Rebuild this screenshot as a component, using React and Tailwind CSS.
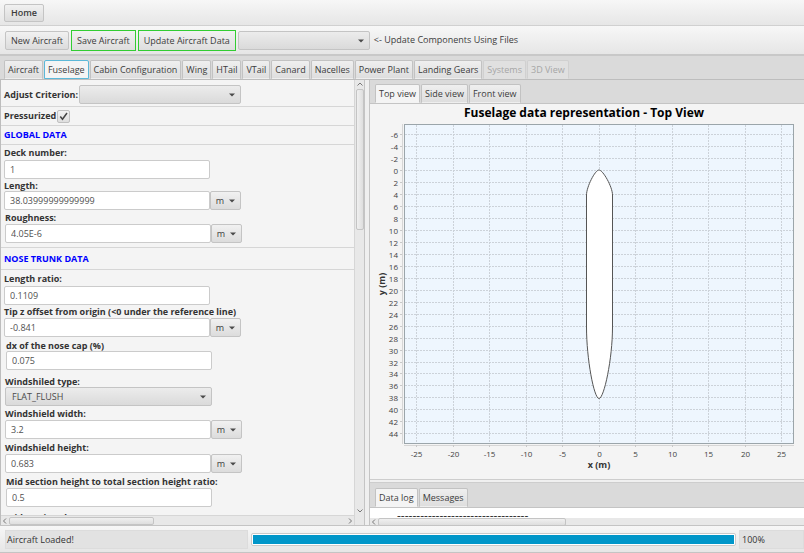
import React from "react";

const btn =
  "rounded-[2px] border border-[#c4c4c4] bg-gradient-to-b from-[#f1f1f1] to-[#dcdcdc] text-[#3c3c3c]";
const greenBtn =
  "h-[21px] border border-[#32cd32] bg-gradient-to-b from-[#f1f1f1] to-[#dedede] px-[5px] leading-[19px] text-[#3c3c3c] whitespace-nowrap";
const selectBox =
  "block h-[19px] w-full appearance-none rounded-[2px] border border-[#c4c4c4] bg-gradient-to-b from-[#ececec] to-[#dadada] pl-[6px] text-[9px] leading-[17px] text-[#4a4a4a]";
const inputBox =
  "block h-[19px] w-[206px] rounded-[2px] border border-[#cbcbcb] bg-white px-[5px] text-[9px] leading-[17px] text-[#505050]";
const labelText = "block h-3 text-[9px] font-bold leading-[13px] whitespace-nowrap";

function Caret({ className }) {
  return (
    <svg viewBox="0 0 6 4" className={`pointer-events-none h-[4px] w-[6px] ${className}`}>
      <path d="M0 0.4h6L3 3.6z" fill="#4a4a4a" />
    </svg>
  );
}

function Select({ id, label, value, className }) {
  return (
    <div className={`relative ${className}`}>
      <select id={id} aria-label={label} className={selectBox} defaultValue={value}>
        <option value={value}>{value}</option>
      </select>
      <Caret className="absolute right-[6px] top-[8px]" />
    </div>
  );
}

function Unit() {
  return (
    <button className={`${btn} flex h-[19px] w-[31px] items-center justify-center gap-[5px] text-[9px]`}>
      m
      <Caret className="" />
    </button>
  );
}

function Field({ id, label, value, unit, className, gap }) {
  return (
    <div className={`flex flex-col ${gap} ${className}`}>
      <label htmlFor={id} className={labelText}>{label}</label>
      <div className="flex">
        <input id={id} type="text" defaultValue={value} className={inputBox} />
        {unit && <Unit />}
      </div>
    </div>
  );
}

function Tabs({ items, selected, focus, disabled = [] }) {
  return (
    <div role="tablist" className="flex h-[19px] items-stretch gap-px">
      {items.map((t) => {
        let look = "border-[#c2c2c2] border-b-transparent bg-gradient-to-b from-[#efefef] to-[#dedede] text-[#3c3c3c]";
        if (t === selected)
          look = focus
            ? "border-[#5cb8d8] bg-[#f4f4f4] text-[#3c3c3c]"
            : "border-[#c2c2c2] border-b-transparent bg-[#f4f4f4] text-[#3c3c3c]";
        if (disabled.includes(t)) look = "border-[#d0d0d0] border-b-transparent bg-[#e0e0e0] text-[#a6a6a6]";
        return (
          <button
            key={t}
            role="tab"
            aria-selected={t === selected}
            disabled={disabled.includes(t)}
            className={`rounded-t-[2px] border px-[3px] text-[9px] leading-[17px] whitespace-nowrap ${look}`}
          >
            {t}
          </button>
        );
      })}
    </div>
  );
}

function Chevron({ d }) {
  return (
    <svg viewBox="0 0 8 8" className="size-2 shrink-0">
      <path d={d} fill="none" stroke="#777" strokeWidth="1" />
    </svg>
  );
}

const xTicks = [-25, -20, -15, -10, -5, 0, 5, 10, 15, 20, 25];
const yTicks = Array.from({ length: 26 }, (_, i) => -6 + i * 2);
const px = (v) => Math.round(228.5 + v * 7.3) + 0.5;
const py = (v) => Math.round(66 + v * 5.985) + 0.5;

function Chart() {
  return (
    <svg viewBox="0 0 434 375" role="img" aria-label="Fuselage top view" className="block h-full w-full">
      <text x="214" y="13" textAnchor="middle" fontSize="12" fontWeight="700" fill="#000">
        Fuselage data representation - Top View
      </text>
      <rect x="34.5" y="20.5" width="389" height="319" fill="#eef6fe" />
      <g stroke="#ccd2d9" strokeDasharray="2 1">
        {xTicks.map((v) => <line key={v} x1={px(v)} x2={px(v)} y1="21" y2="339" />)}
        {yTicks.map((v) => <line key={v} x1="35" x2="423" y1={py(v)} y2={py(v)} />)}
      </g>
      <rect x="34.5" y="20.5" width="389" height="319" fill="none" stroke="#9ba5aa" />
      <path d="M32.5 20V340M34 341.5H424" stroke="#d6d6d6" />
      <g stroke="#c8c8c8">
        {xTicks.map((v) => <line key={v} x1={px(v)} x2={px(v)} y1="341" y2="343" />)}
        {yTicks.map((v) => <line key={v} x1="30" x2="32" y1={py(v)} y2={py(v)} />)}
      </g>
      <g fontSize="8" fill="#3f3f3f">
        {xTicks.map((v) => <text key={v} x={px(v)} y="353" textAnchor="middle">{v}</text>)}
        {yTicks.map((v) => <text key={v} x="28" y={py(v) + 3} textAnchor="end">{v}</text>)}
      </g>
      <text x="229" y="364" textAnchor="middle" fontSize="9" fontWeight="700" fill="#333">x (m)</text>
      <text transform="translate(15 180) rotate(-90)" textAnchor="middle" fontSize="9" fontWeight="700" fill="#333">
        y (m)
      </text>
      <path
        d="M229 66C233 66 242.500 83 242.500 91V223C242.500 255 234 294.500 229 294.500C224 294.500 216.500 255 216.500 223V91C216.500 83 225 66 229 66Z"
        fill="#fff"
        stroke="#555"
      />
    </svg>
  );
}

export default function App() {
  return (
    <div className="flex h-screen flex-col overflow-hidden bg-[#f4f4f4] font-['Open_Sans','Noto_Sans',sans-serif] text-[9px] text-[#333]">
      <header className="flex h-[26px] shrink-0 items-center border-b border-[#d0d0d0] bg-gradient-to-b from-[#f7f7f7] to-[#e6e6e6] px-[4px]">
        <button className={`${btn} h-[18px] px-[6px] font-semibold leading-4`}>Home</button>
      </header>
      <div className="flex h-[30px] shrink-0 items-center gap-[2px] border-b-2 border-[#c8c8c8] bg-gradient-to-b from-[#f7f7f7] to-[#e6e6e6] px-[5px]">
        <button className={`${btn} h-[19px] px-[5px] leading-[17px]`}>New Aircraft</button>
        <button className={greenBtn}>Save Aircraft</button>
        <button className={greenBtn}>Update Aircraft Data</button>
        <Select id="files" label="Component files" value="" className="w-[132px]" />
        <span className="pl-[2px] text-[#3c3c3c]">&lt;- Update Components Using Files</span>
      </div>
      <nav className="flex h-[24px] shrink-0 items-end border-b border-[#bdbdbd] bg-[#dadada] px-[4px]">
        <Tabs
          items={["Aircraft", "Fuselage", "Cabin Configuration", "Wing", "HTail", "VTail", "Canard", "Nacelles", "Power Plant", "Landing Gears", "Systems", "3D View"]}
          selected="Fuselage"
          focus
          disabled={["Systems", "3D View"]}
        />
      </nav>

      <main className="flex min-h-0 flex-1">
        <section className="flex min-w-0 flex-[363] border-l border-[#bdbdbd]">
          <div className="flex min-w-0 flex-1 flex-col">
            <form className="min-h-0 flex-1 overflow-hidden pt-[5px]">
              <div className="flex h-[22px] items-start gap-px border-b border-[#d6d6d6] pl-[3px]">
                <label htmlFor="criterion" className="font-bold leading-[19px] whitespace-nowrap">Adjust Criterion:</label>
                <Select id="criterion" label="Adjust Criterion" value="" className="w-[162px]" />
              </div>
              <div className="flex h-[19px] items-center gap-px border-b border-[#d6d6d6] pl-[3px]">
                <label htmlFor="press" className="font-bold">Pressurized</label>
                <span className="relative flex">
                  <input
                    id="press"
                    type="checkbox"
                    defaultChecked
                    className="size-[13px] appearance-none rounded-[2px] border border-[#c0c0c0] bg-gradient-to-b from-[#f2f2f2] to-[#dedede]"
                  />
                  <svg viewBox="0 0 13 13" className="pointer-events-none absolute inset-0 size-[13px]">
                    <path d="M3.300 6.500 5.500 9.300 10 3" fill="none" stroke="#444" strokeWidth="1.500" />
                  </svg>
                </span>
              </div>
              <h2 className="h-[19px] border-b border-[#d6d6d6] pl-[3px] font-bold leading-[18px] text-[#0000ff]">GLOBAL DATA</h2>
              <div className="pb-[4px] pl-[3px] pt-px">
                <Field id="deck" label="Deck number:" value="1" gap="gap-[2px]" className="" />
                <Field id="length" label="Length:" value="38.03999999999999" unit gap="" className="" />
                <Field id="rough" label="Roughness:" value="4.05E-6" unit gap="gap-px" className="pl-px pt-px" />
              </div>
              <h2 className="h-[23px] border-y border-[#d6d6d6] pl-[3px] font-bold leading-[22px] text-[#0000ff]">NOSE TRUNK DATA</h2>
              <div className="pl-[3px] pt-[2px]">
                <Field id="ratio" label="Length ratio:" value="0.1109" gap="gap-[2px]" className="" />
                <Field id="tip" label="Tip z offset from origin (<0 under the reference line)" value="-0.841" unit gap="gap-px" className="" />
                <Field id="dx" label="dx of the nose cap (%)" value="0.075" gap="" className="pl-[2px] pt-[2px]" />
                <div className="pl-px pt-[5px]">
                  <label htmlFor="wtype" className={labelText}>Windshiled type:</label>
                  <Select id="wtype" label="Windshiled type" value="FLAT_FLUSH" className="w-[207px]" />
                </div>
                <Field id="wwidth" label="Windshield width:" value="3.2" unit gap="gap-px" className="pl-px pt-px" />
                <Field id="wheight" label="Windshield height:" value="0.683" unit gap="gap-px" className="pl-px pt-[2px]" />
                <Field id="mid" label="Mid section height to total section height ratio:" value="0.5" gap="gap-px" className="pl-[2px] pt-[2px]" />
                <Field id="midrho" label="Mid section rho upper:" value="0.2" gap="gap-px" className="pl-[2px] pt-[4px]" />
              </div>
            </form>
            <div className="flex h-[10px] shrink-0 items-center border-t border-[#d6d6d6] bg-[#e8e8e8]">
              <Chevron d="M5 1.500 2.500 4 5 6.500" />
              <div className="h-[8px] w-[145px] rounded-[2px] border border-[#c4c4c4] bg-gradient-to-b from-[#f0f0f0] to-[#dedede]" />
              <span className="flex-1" />
              <Chevron d="M3 1.500 5.500 4 3 6.500" />
            </div>
          </div>
          <div className="flex w-[10px] shrink-0 flex-col items-center border-l border-[#d6d6d6] bg-[#e8e8e8] pb-[10px]">
            <Chevron d="M1.500 5.500 4 3 6.500 5.500" />
            <div className="mt-px h-[141px] w-[8px] rounded-[2px] border border-[#c4c4c4] bg-gradient-to-r from-[#f0f0f0] to-[#dedede]" />
            <span className="flex-1" />
            <Chevron d="M1.500 2.500 4 5 6.500 2.500" />
          </div>
        </section>
        <div role="separator" className="w-[6px] shrink-0 border-x border-[#c4c4c4] bg-[#efefef]" />
        <section className="flex min-w-0 flex-[434] flex-col">
          <div className="flex h-[24px] shrink-0 items-end border-b border-[#c4c4c4] bg-[#dadada] px-[5px]">
            <Tabs items={["Top view", "Side view", "Front view"]} selected="Top view" />
          </div>
          <div className="min-h-0 flex-1">
            <Chart />
          </div>
          <div className="h-[4px] shrink-0 border-y border-[#cdcdcd] bg-[#f0f0f0]" />
          <div className="flex h-[25px] shrink-0 items-end border-b border-[#c4c4c4] bg-[#dadada] px-[5px]">
            <Tabs items={["Data log", "Messages"]} selected="Data log" />
          </div>
          <pre className="h-[10px] shrink-0 overflow-hidden bg-white pl-[27px] font-['Open_Sans','Noto_Sans',sans-serif] text-[12px] leading-[16px] text-[#333]">
            ----------------------------------
          </pre>
          <div className="flex h-[7px] shrink-0 items-start overflow-hidden bg-[#e8e8e8]">
            <Chevron d="M5 1.500 2.500 4 5 6.500" />
            <div className="h-[8px] w-[188px] rounded-[2px] border border-[#c4c4c4] bg-gradient-to-b from-[#f0f0f0] to-[#dedede]" />
          </div>
        </section>
      </main>

      <footer className="flex h-[28px] shrink-0 items-center gap-[3px] border-y border-[#c4c4c4] bg-gradient-to-b from-[#f7f7f7] to-[#e6e6e6] pl-[5px]">
        <p className="h-[19px] w-[243px] border border-[#dcdcdc] bg-[#e2e2e2] pl-px leading-[17px]">Aircraft Loaded!</p>
        <div role="progressbar" aria-label="Loading" aria-valuenow={100} className="h-[13px] flex-1 rounded-[2px] border border-[#cacaca] bg-white p-px">
          <div className="h-full w-full bg-[#0096c9]" />
        </div>
        <p className="h-[19px] w-[65px] border border-[#dcdcdc] bg-[#e2e2e2] pl-[2px] leading-[17px]">100%</p>
      </footer>
    </div>
  );
}
